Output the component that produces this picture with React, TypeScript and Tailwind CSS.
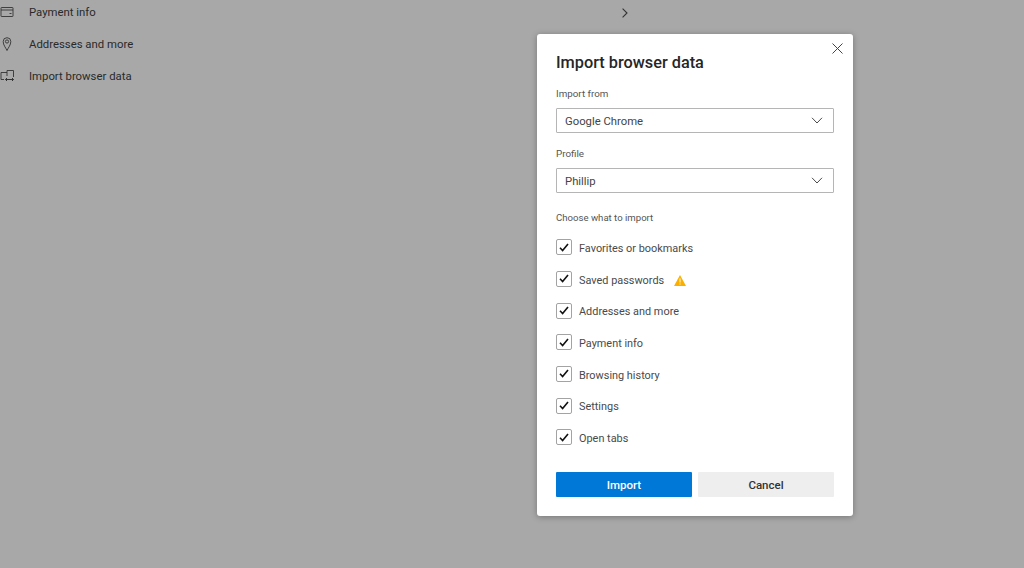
import React from "react";

const items = ["Favorites or bookmarks", "Saved passwords", "Addresses and more", "Payment info", "Browsing history", "Settings", "Open tabs"];

function Chevron() {
  return (
    <svg width="12" height="7" viewBox="0 0 12 7" fill="none" stroke="#4a4a4a" strokeWidth="1">
      <path d="M1 .8 6 6 11 .8" />
    </svg>
  );
}

function Select({ value }: { value: string }) {
  return (
    <div className="h-[25px] flex items-center justify-between pl-2 pr-[10px] bg-white border border-[#b5b5b5] rounded-[1px] text-[11.300px] text-[#444]">
      <span className="pt-[3px]">{value}</span>
      <Chevron />
    </div>
  );
}

function Row({ icon, label, chevron }: { icon: React.ReactNode; label: string; chevron?: boolean }) {
  return (
    <div className="h-8 w-[628px] flex items-center text-[11.350px] text-[#2a2a2a]">
      <div className="w-[29px] shrink-0 -mt-[2px]">{icon}</div>
      <span className="flex-1">{label}</span>
      {chevron && (
        <svg width="6" height="10" viewBox="0 0 6 10" fill="none" stroke="#333" strokeWidth="1.100" className="-mt-[1px]">
          <path d="M.6.6 5 5 .6 9.4" />
        </svg>
      )}
    </div>
  );
}

export default function App() {
  return (
    <div className="relative w-[1024px] h-[568px] overflow-hidden bg-[#a8a8a8] font-['Roboto',sans-serif]">
      <div className="flex flex-col -mt-[3px]">
        <Row
          chevron
          label="Payment info"
          icon={
            <svg width="14" height="10" viewBox="0 0 14 10" fill="none" stroke="#333" strokeWidth="0.9" className="block">
              <rect x="1" y="0.5" width="12" height="9" rx="0.5" />
              <path d="M1 3h12M9.500 6.500h2" />
            </svg>
          }
        />
        <Row
          label="Addresses and more"
          icon={
            <svg width="14" height="14" viewBox="0 0 14 14" fill="none" stroke="#333" strokeWidth="0.9" className="block">
              <path d="M7 13.500C5.600 10.500 3.200 8 3.200 4.500a3.800 3.800 0 0 1 7.600 0C10.800 8 8.400 10.500 7 13.500Z" />
              <circle cx="7" cy="4.500" r="1.600" />
            </svg>
          }
        />
        <Row
          label="Import browser data"
          icon={
            <svg width="15" height="12" viewBox="0 0 15 12" fill="none" stroke="#333" strokeWidth="0.9" className="block">
              <path d="M7 2.500H1v7h3M7 6V.5h6.500V7" />
              <path d="M5.500 9.500h8M5.500 9.500 7 8M5.500 9.500 7 11M13.500 9.500 12 8M13.500 9.500 12 11" strokeWidth="1" />
            </svg>
          }
        />
      </div>

      <div className="absolute left-[537px] top-[34px] w-[316px] h-[482px] bg-white rounded-[3px] shadow-[0_1px_6px_rgba(0,0,0,0.3)] px-[19px] pt-[19px] text-[#3a3a3a]">
        <button className="absolute right-[10px] top-[9px]">
          <svg width="11" height="11" viewBox="0 0 11 11" fill="none" stroke="#444" strokeWidth="1" className="block">
            <path d="M.5.500l10 10M10.500.500l-10 10" />
          </svg>
        </button>
        <h1 className="text-[16.300px] leading-5 font-medium text-[#262626]">Import browser data</h1>

        <div className="mt-[14px] text-[9.800px] leading-[14px] text-[#555]">Import from</div>
        <div className="mt-[7px]"><Select value="Google Chrome" /></div>
        <div className="mt-[14px] text-[9.800px] leading-[14px] text-[#555]">Profile</div>
        <div className="mt-[7px]"><Select value="Phillip" /></div>
        <div className="mt-[17.500px] text-[9.600px] leading-[14px] text-[#555]">Choose what to import</div>

        <div className="mt-[8px] flex flex-col">
          {items.map((label) => (
            <div key={label} className="h-[31.670px] flex items-center gap-[7px] text-[10.900px] text-[#4a4a4a]">
              <div className="w-4 h-4 mb-[2px] shrink-0 border-[1.500px] border-[#a3a3a3] rounded-[2px] flex items-center justify-center">
                <svg width="10" height="9" viewBox="0 0 10 9" fill="none" stroke="#111" strokeWidth="1.600">
                  <path d="M1 4.800 3.600 7.500 9 1" />
                </svg>
              </div>
              <span className="pt-[2px]">{label}</span>
              <span className="contents">
                {label === "Saved passwords" && (
                  <svg width="12" height="11" viewBox="0 0 12 11" className="ml-[3px] mt-[2px]">
                    <path d="M6 0 12 11H0Z" fill="#fbb000" />
                    <path d="M6 3.500v4M6 8.500v1" stroke="#fff" strokeWidth="1" />
                  </svg>
                )}
              </span>
            </div>
          ))}
        </div>

        <div className="mt-[17.500px] flex gap-[6px] text-[11.500px] font-medium">
          <button className="flex-1 h-[25px] pt-[4px] rounded-[1px] bg-[#0078d7] text-white">Import</button>
          <button className="flex-1 h-[25px] pt-[4px] rounded-[1px] bg-[#eeeeee] text-[#333]">Cancel</button>
        </div>
      </div>
    </div>
  );
}
